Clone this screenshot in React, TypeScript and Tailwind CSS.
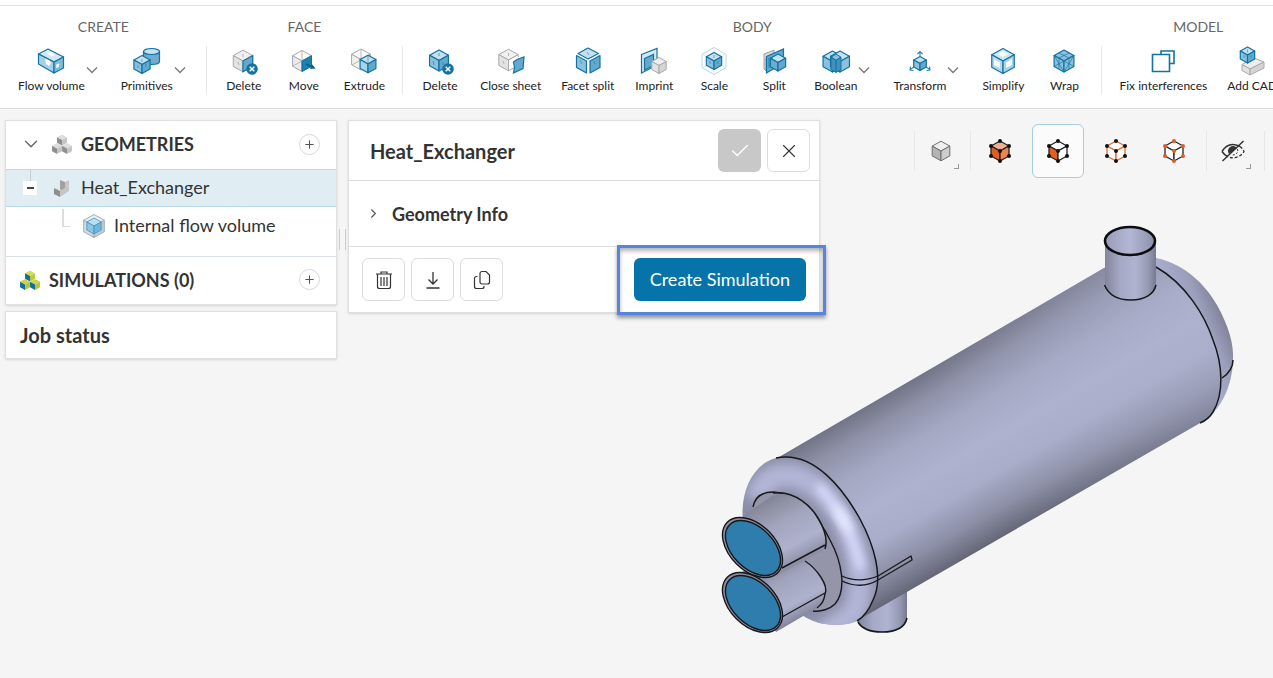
import React from "react";
import { Check, ChevronDown, ChevronRight, Plus, X } from "lucide-react";

const BLUE = "#1273a3";

type Pt = [number, number];
const pts = (list: Pt[]) => list.map((p) => p.join(",")).join(" ");

function cubePoints(cx: number, cy: number, r: number) {
  const w = r * 0.9;
  const h = r / 2;
  return {
    top: [cx, cy - r] as Pt,
    ur: [cx + w, cy - h] as Pt,
    lr: [cx + w, cy + h] as Pt,
    bottom: [cx, cy + r] as Pt,
    ll: [cx - w, cy + h] as Pt,
    ul: [cx - w, cy - h] as Pt,
    mid: [cx, cy] as Pt,
  };
}

type CubeProps = {
  cx: number;
  cy: number;
  r: number;
  top?: string;
  left?: string;
  right?: string;
  stroke?: string;
  sw?: number;
};

function Cube({ cx, cy, r, top = "#c5e0ee", left = "#8cc0dc", right = "#64a9cd", stroke = BLUE, sw = 1.2 }: CubeProps) {
  const c = cubePoints(cx, cy, r);
  return (
    <g stroke={stroke} strokeWidth={sw} strokeLinejoin="round">
      <polygon points={pts([c.top, c.ur, c.mid, c.ul])} fill={top} />
      <polygon points={pts([c.ul, c.mid, c.bottom, c.ll])} fill={left} />
      <polygon points={pts([c.mid, c.ur, c.lr, c.bottom])} fill={right} />
    </g>
  );
}

const grey = { top: "#f0f0f0", left: "#e2e2e2", right: "#d4d4d4", stroke: "#a9a9a9", sw: 1 };

function Badge() {
  return (
    <g>
      <circle cx="24" cy="23" r="5.8" fill={BLUE} />
      <path d="M21.7 20.7l4.6 4.6M26.3 20.7l-4.6 4.6" stroke="#fff" strokeWidth="1.5" />
    </g>
  );
}

function Icon({ children }: { children: React.ReactNode }) {
  return (
    <svg viewBox="0 0 32 32" className="size-8 shrink-0" fill="none" aria-hidden="true">
      {children}
    </svg>
  );
}

const icons: Record<string, React.ReactNode> = {
  flow: (
    <g stroke={BLUE} strokeWidth="1.2" strokeLinejoin="round">
      <path d="M3.500 8L13 3L28.500 11L19 16Z" fill="#d3e8f2" />
      <path d="M3.500 8L19 16V27L3.500 18Z" fill="#a5d0e5" />
      <path d="M19 16L28.500 11V22L19 27Z" fill="#7fbbd9" />
      <path d="M10 13l4 1 2 3-2 3-3-2zM21 19l2-1.500 1.500.5-1 3-2 1zM12 7l5-1 3 3-4 1.500z" fill="#fff" stroke="none" />
    </g>
  ),
  primitives: (
    <>
      <path d="M12.500 5.500v10c0 4 16 4 16 0v-10z" fill="#6cadd0" stroke={BLUE} strokeWidth="1.200" />
      <ellipse cx="20.500" cy="5.500" rx="8" ry="3" fill="#c5e0ee" stroke={BLUE} strokeWidth="1.200" />
      <Cube cx={11} cy={18.500} r={9} />
      <path d="M11 13v3M7 19v3M15 18v3" stroke={BLUE} strokeWidth=".5" />
    </>
  ),
  faceDelete: (
    <>
      <Cube cx={15} cy={15} r={10.800} {...grey} right="#64a9cd" />
      <path d="M15 8v3M10 16l1 3" stroke="#aaa" strokeWidth=".8" />
      <path d="M15 15l9.700-5.400v10.800L15 25.800z" stroke={BLUE} strokeWidth="1.200" />
      <Badge />
    </>
  ),
  move: (
    <>
      <Cube cx={14} cy={15} r={10.500} {...grey} top="#fbfbfb" left="#ececec" right="#1c82b2" />
      <path d="M4.500 20.200l9.500-5M14 4.500v10.500" stroke="#aaa" strokeWidth=".8" />
      <path d="M14 15l9.500-5.200v10.400L14 25.500z" fill="#1c82b2" stroke={BLUE} />
      <path d="M18 18l6 3" stroke="#0b5c87" strokeWidth="1.400" />
      <path d="M24 18.200l3.500 4.300-5.500.5z" fill="#0b5c87" />
    </>
  ),
  extrude: (
    <>
      <Cube cx={13} cy={13.500} r={10.500} {...grey} top="#fafafa" left="#f0f0f0" right="#e4e4e4" />
      <path d="M13 3v10M4 19l9-5" stroke="#aaa" strokeWidth=".8" />
      <Cube cx={20} cy={18} r={8.800} left="#a8d2e6" />
      <path d="M20 9.500V18" stroke={BLUE} strokeWidth=".5" />
    </>
  ),
  bodyDelete: (
    <>
      <Cube cx={15} cy={14.500} r={10.500} />
      <path d="M15 7v3M9 15l1 4M19 16v3" stroke={BLUE} strokeWidth=".6" />
      <Badge />
    </>
  ),
  closeSheet: (
    <>
      <Cube cx={13.500} cy={14} r={10.800} {...grey} right="#fff" />
      <path d="M13.500 7v3M8 15l1 3" stroke="#aaa" strokeWidth=".8" />
      <path d="M19.500 13V26h6V10z" fill="#fff" />
      <path d="M18.500 16L22 13.500l7-2.500-1 11.500L18.500 27l1-6z" fill="#64a9cd" stroke={BLUE} strokeWidth="1.200" />
    </>
  ),
  facetSplit: (
    <g stroke={BLUE} strokeWidth="1.200" strokeLinejoin="round">
      <path d="M16 2l10.500 5.500L16 13 6 7.500z" fill="#c5e0ee" />
      <path d="M4.500 9.500l10 5.500v12l-10-5.500z" fill="#8cc0dc" />
      <path d="M28 9.500L18 15v12l10-5.500z" fill="#64a9cd" />
      <path d="M15 6l2 3M8 14l2 4M22 15l1 3" strokeWidth=".5" />
    </g>
  ),
  imprint: (
    <>
      <path d="M3.500 8.500L19 2.500V19L3.500 27z" fill="#d3e8f2" stroke={BLUE} strokeWidth="1.200" />
      <path d="M6.500 12.500L15.500 8.500v11l-9 4.500z" fill="#64a9cd" stroke={BLUE} strokeWidth="1.200" />
      <Cube cx={21} cy={19.500} r={8} {...grey} />
    </>
  ),
  scale: (
    <>
      <path d="M16 1.500l12 6.800v13.400L16 28.500 4 21.700V8.300z" stroke="#b7d8e8" />
      <path d="M16 2v26M4 8l5 3M28 8l-5 3M4 22l5-3M28 22l-5-3" stroke="#dcebf2" />
      <Cube cx={16} cy={15} r={8.500} />
      <path d="M16 9v3M12 15v3M20 15v3" stroke={BLUE} strokeWidth=".5" />
    </>
  ),
  split: (
    <>
      <path d="M6 8l10-4v4L8 12v13l-2-2z" fill="#d8d8d8" stroke="#9a9a9a" strokeWidth=".9" />
      <path d="M8.500 10.500L25.500 3v14L8.500 27z" fill="#64a9cd" stroke={BLUE} strokeWidth="1.200" />
      <Cube cx={20} cy={16.500} r={8.500} left="#6cadd0" />
      <path d="M11 12v10M14 11v3" stroke={BLUE} strokeWidth=".8" />
    </>
  ),
  boolean: (
    <>
      <Cube cx={12.500} cy={15.500} r={10.500} />
      <Cube cx={20} cy={15.500} r={10.500} left="#64a9cd" right="#8cc0dc" />
      <path d="M16 8l5 3.200-5 3.200-5-3.200z" fill="#8cc0dc" stroke={BLUE} />
      <path d="M11 11.200v12.300l5 3 5-3V11.200l-5 3.200z" fill="#3e92bd" stroke={BLUE} />
      <path d="M16 14.500V26" stroke={BLUE} />
    </>
  ),
  transform: (
    <>
      <Cube cx={16} cy={17.500} r={7} />
      <g stroke="#2b82ad" strokeWidth="1.100">
        <path d="M16 10.500V6M13.500 8L16 5.500 18.500 8M10 21l-4 2.500M6.500 20.500L6 24l3.500.5M22 21l4 2.500M25.500 20.500L26 24l-3.500.5" />
      </g>
    </>
  ),
  simplify: (
    <>
      <Cube cx={16} cy={15} r={12.500} top="#cfe6f1" left="#b4d8e9" right="#a8d2e6" />
      <g fill="#fff" fillOpacity=".85">
        <path d="M16 5l5.500 3-5.500 3-5.500-3z" />
        <path d="M7 13l6 3.500v5.500L7 19zM19 16.500l6-3.500v6l-6 3z" />
      </g>
    </>
  ),
  wrap: (
    <>
      <Cube cx={16} cy={15} r={11} left="#8cc0dc" right="#8cc0dc" top="#8cc0dc" />
      <path d="M6 9.500l10 16.500L26 9.500M6 20.500l10-5.500 10 5.500M11 7l10 5M21 7l-10 5M11 12v11M21 12v11" stroke={BLUE} strokeWidth=".7" />
    </>
  ),
  fix: (
    <g stroke={BLUE} strokeWidth="1.600">
      <path d="M14 8V5h13v12.500h-4" />
      <path d="M5.500 8.500h17v17h-17z" />
    </g>
  ),
  addCad: (
    <>
      <g stroke="#aaa" strokeWidth="1" strokeLinejoin="round">
        <path d="M6 18.500L18 12l10 4-14 7z" fill="#ededed" />
        <path d="M6 18.500l8 4.500v6l-8-4.500z" fill="#e2e2e2" />
        <path d="M14 23l14-7v6l-14 7z" fill="#d4d4d4" />
      </g>
      <Cube cx={11.500} cy={9} r={8} />
      <path d="M11.500 3.500v3M8 9v3M15 9v3" stroke={BLUE} strokeWidth=".5" />
    </>
  ),
};

type Tool = { label: string; icon: string; menu?: boolean };
const groups: { title: string; tools: Tool[] }[] = [
  {
    title: "CREATE",
    tools: [
      { label: "Flow volume", icon: "flow", menu: true },
      { label: "Primitives", icon: "primitives", menu: true },
    ],
  },
  {
    title: "FACE",
    tools: [
      { label: "Delete", icon: "faceDelete" },
      { label: "Move", icon: "move" },
      { label: "Extrude", icon: "extrude" },
    ],
  },
  {
    title: "BODY",
    tools: [
      { label: "Delete", icon: "bodyDelete" },
      { label: "Close sheet", icon: "closeSheet" },
      { label: "Facet split", icon: "facetSplit" },
      { label: "Imprint", icon: "imprint" },
      { label: "Scale", icon: "scale" },
      { label: "Split", icon: "split" },
      { label: "Boolean", icon: "boolean", menu: true },
      { label: "Transform", icon: "transform", menu: true },
      { label: "Simplify", icon: "simplify" },
      { label: "Wrap", icon: "wrap" },
    ],
  },
  {
    title: "MODEL",
    tools: [
      { label: "Fix interferences", icon: "fix" },
      { label: "Add CAD", icon: "addCad" },
    ],
  },
];

function Ribbon() {
  return (
    <header className="overflow-hidden border-b border-[#dcdcdc] bg-white pt-[5px]">
      <div className="flex w-max min-w-full border-t border-[#dedede] px-2 pb-[14px] pt-3">
        {groups.map((group, i) => (
          <React.Fragment key={group.title}>
            {i > 0 && <div className="mx-[7px] mt-7 w-px bg-[#e8e8e8]" />}
            <section className="flex flex-col" aria-label={group.title}>
              <h2 className="text-center text-sm leading-[18px] text-[#666]">{group.title}</h2>
              <div className="mt-[10px] flex">
                {group.tools.map((tool) => (
                  <div key={tool.label} className="flex">
                    <button className="flex min-w-[60px] flex-col items-center px-[10px] text-xs leading-4 text-[#222]">
                      <Icon>{icons[tool.icon]}</Icon>
                      <span className="whitespace-nowrap">{tool.label}</span>
                    </button>
                    {tool.menu && (
                      <button className="-ml-[9px] mr-[13px] mt-[18px] h-3 w-3" aria-label={`${tool.label} options`}>
                        <svg viewBox="0 0 12 12" className="size-3" fill="none" stroke="#777" strokeWidth="1.300">
                          <path d="M1 3.500L6 8.500l5-5" />
                        </svg>
                      </button>
                    )}
                  </div>
                ))}
              </div>
            </section>
          </React.Fragment>
        ))}
      </div>
    </header>
  );
}

type Shade = { top: string; left: string; right: string };

function CubeStack({ a, b }: { a: Shade; b: Shade }) {
  return (
    <svg viewBox="0 0 22 22" className="size-[22px] shrink-0" aria-hidden="true">
      <Cube cx={11} cy={7} r={5.500} {...a} stroke="none" />
      <Cube cx={6} cy={15.500} r={5.500} {...b} stroke="none" />
      <Cube cx={16} cy={15.500} r={5.500} {...b} stroke="none" />
    </svg>
  );
}

function AddButton({ label }: { label: string }) {
  return (
    <button aria-label={label} className="flex size-[21px] items-center justify-center rounded-full border border-[#d2d9dc] bg-white">
      <Plus className="size-[13px] text-[#555]" strokeWidth={2} />
    </button>
  );
}

function Sidebar() {
  const greyShade = { top: "#dedede", left: "#8f8f8f", right: "#c4c4c4" };
  return (
    <nav className="flex w-[332px] shrink-0 flex-col gap-[6px] text-[#333]" aria-label="Project">
      <div className="border border-[#e0e0e0] bg-white shadow">
        <div className="flex h-12 items-center pb-[2px] pl-[14px] pr-4">
          <button aria-label="Collapse geometries" className="mr-[9px]">
            <ChevronDown className="size-[22px] text-[#666]" strokeWidth={1.5} />
          </button>
          <CubeStack a={greyShade} b={greyShade} />
          <h2 className="ml-2 flex-1 text-lg font-bold leading-6">GEOMETRIES</h2>
          <AddButton label="Add geometry" />
        </div>
        <div className="flex h-[38px] items-stretch border-y border-[#bcd9e6] bg-[#e0eef4] pl-4">
          <div className="flex w-4 flex-col items-center">
            <div className="h-[11px] w-px bg-[#c5d0d5]" />
            <button aria-label="Collapse Heat_Exchanger" className="flex size-[14px] items-center justify-center bg-white">
              <span className="h-[2px] w-[7px] bg-[#444]" />
            </button>
          </div>
          <svg viewBox="0 0 22 22" className="ml-3 size-[22px] self-center" aria-hidden="true">
            <path d="M10 3l4-2 5 2-4 2z" fill="#ededed" />
            <path d="M15 5l4-2v11l-9 6v-6l5-3z" fill="#c6c6c6" />
            <path d="M10 3l5 2v6l-5 3z" fill="#a1a1a1" />
            <path d="M4 11l3-1 4 3-1 1z" fill="#e5e5e5" />
            <path d="M4 11l6 3v6l-6-3z" fill="#8e8e8e" />
          </svg>
          <span className="ml-[9px] mt-[5px] text-lg leading-6">Heat_Exchanger</span>
        </div>
        <div className="flex h-[49px] items-start pl-14 pt-[2px]">
          <div className="h-[18px] w-2 border-b border-l-2 border-[#dcdcdc]" />
          <svg viewBox="0 0 24 24" className="ml-3 mt-[5px] size-6" aria-hidden="true">
            <Cube cx={12} cy={12} r={11.500} top="#e8eef1" left="#d0dbe0" right="#c0ccd2" stroke="#a3b1b8" sw={1} />
            <Cube cx={12} cy={12} r={8} top="#b9e0f2" left="#8cc6e4" right="#6fb5dc" stroke="#4a93bd" sw={0.8} />
          </svg>
          <span className="ml-2 mt-1 text-lg leading-6">Internal flow volume</span>
        </div>
        <div className="flex h-12 items-center border-t border-[#d8dfe2] pb-[2px] pl-[13px] pr-4">
          <CubeStack
            a={{ top: "#d5dd52", left: "#0f6ea3", right: "#b9c93a" }}
            b={{ top: "#cdd640", left: "#0f6ea3", right: "#b5c631" }}
          />
          <h2 className="ml-2 flex-1 text-lg font-bold leading-6">SIMULATIONS (0)</h2>
          <AddButton label="Add simulation" />
        </div>
      </div>
      <div className="flex h-12 items-center border border-[#e0e0e0] bg-white pl-[14px] shadow">
        <h2 className="text-xl font-bold leading-6">Job status</h2>
      </div>
    </nav>
  );
}

const squareButton = "flex size-[43px] items-center justify-center rounded-md border border-[#dcdcdc] bg-white text-[#333]";

function DetailsPanel() {
  return (
    <section className="w-[472px] shrink-0 border border-[#e0e0e0] bg-white text-[#333] shadow" aria-label="Geometry details">
      <div className="flex h-[60px] items-center gap-[6px] border-b border-[#dedede] pl-[21px] pr-[9px]">
        <h1 className="flex-1 text-xl font-bold leading-6">Heat_Exchanger</h1>
        <button aria-label="Apply" className="flex size-[43px] items-center justify-center rounded-md bg-[#c8c8c8] text-white">
          <Check className="size-[22px]" strokeWidth={1.5} />
        </button>
        <button aria-label="Close" className={squareButton}>
          <X className="size-[22px]" strokeWidth={1.2} />
        </button>
      </div>
      <button className="flex h-[65px] w-full items-center pl-[17px]">
        <ChevronRight className="size-[15px] text-[#555]" strokeWidth={1.8} />
        <span className="ml-[11px] text-lg font-bold leading-6">Geometry Info</span>
      </button>
      <div className="relative flex h-[66px] items-center gap-[6px] border-t border-[#dedede] px-[13px]">
        <button aria-label="Delete" className={squareButton}>
          <svg viewBox="0 0 20 20" className="size-5" fill="none" stroke="currentColor" strokeWidth="1.200">
            <path d="M2 4h16M7 4V2h6v2M3.500 4v12.500a2 2 0 0 0 2 2h9a2 2 0 0 0 2-2V4M7 7v9M10 7v9M13 7v9" />
          </svg>
        </button>
        <button aria-label="Download" className={squareButton}>
          <svg viewBox="0 0 20 20" className="size-5" fill="none" stroke="currentColor" strokeWidth="1.300">
            <path d="M10 2v12M5.500 9.500L10 14l4.500-4.500M3.500 18h13" />
          </svg>
        </button>
        <button aria-label="Copy" className={squareButton}>
          <svg viewBox="0 0 20 20" className="size-5" fill="none" stroke="currentColor" strokeWidth="1.200">
            <path d="M10 1.500h4l3.500 3.500v7a2 2 0 0 1-2 2H10a2 2 0 0 1-2-2V3.500a2 2 0 0 1 2-2zM5.500 6.500H4.500a2 2 0 0 0-2 2v8a2 2 0 0 0 2 2H10a2 2 0 0 0 2-2v-.5" />
          </svg>
        </button>
        <button className="ml-auto h-[43px] rounded-md bg-[#0674a8] px-4 pb-[2px] text-lg leading-6 text-white">Create Simulation</button>
        <div className="pointer-events-none absolute -right-[7px] -top-[2px] h-[70px] w-[209px] border-[3px] border-[#5585dc] shadow-[0_3px_4px_rgba(0,0,0,0.4),inset_0_3px_4px_rgba(0,0,0,0.3)]" />
      </div>
    </section>
  );
}

function SelectCube({ fill, line, dot }: { fill: [string, string, string]; line: string; dot: string }) {
  const c = cubePoints(12, 12, 10);
  return (
    <svg viewBox="0 0 24 24" className="size-6" aria-hidden="true">
      <Cube cx={12} cy={12} r={10} top={fill[0]} left={fill[1]} right={fill[2]} stroke={line} sw={1.300} />
      {Object.values(c).map(([x, y]) => (
        <circle key={`${x}-${y}`} cx={x} cy={y} r="2" fill={dot} />
      ))}
    </svg>
  );
}

function Corner() {
  return <span className="absolute bottom-[9px] right-2 size-[5px] border-b border-r border-[#999]" />;
}

function ViewTools() {
  const btn = "relative flex h-[54px] w-[52px] items-center justify-center rounded-md";
  const sep = "h-10 w-px bg-[#e6e6e6]";
  return (
    <div className="z-10 ml-auto mr-2 mt-1 flex shrink-0 items-center" role="toolbar" aria-label="View">
      <div className={sep} />
      <button aria-label="Render mode" className={btn}>
        <svg viewBox="0 0 24 24" className="size-6" aria-hidden="true">
          <Cube cx={12} cy={12} r={9.800} top="#eeeeee" left="#b4b4b4" right="#cccccc" stroke="#6e6e6e" sw={1} />
        </svg>
        <Corner />
      </button>
      <div className={`${sep} mx-[3px]`} />
      <div className="flex gap-[6px]">
        <button aria-label="Select volumes" className={btn}>
          <SelectCube fill={["#f3b08f", "#df5f20", "#ee8450"]} line="#222" dot="#111" />
        </button>
        <button aria-label="Select faces" aria-pressed="true" className={`${btn} border border-[#a5cde2] bg-[#fbfbfb]`}>
          <SelectCube fill={["#fff", "#df5f20", "#fff"]} line="#222" dot="#111" />
        </button>
        <button aria-label="Select edges" className={btn}>
          <SelectCube fill={["#fff", "#fff", "#fff"]} line="#df6a30" dot="#111" />
        </button>
        <button aria-label="Select vertices" className={btn}>
          <SelectCube fill={["#fff", "#fff", "#fff"]} line="#222" dot="#df5f20" />
        </button>
      </div>
      <div className={`${sep} ml-[6px]`} />
      <button aria-label="Toggle visibility" className={btn}>
        <svg viewBox="0 0 26 26" className="size-[26px]" fill="none" stroke="#333" aria-hidden="true">
          <path d="M2 13.500C6 7 12 4.500 20 8.500M2 13.500c2 3 4 4.500 6 5.300" strokeWidth="1.500" />
          <path d="M20 8.500c2 1.500 3 3 4 5-3 5-8 7-14 6" strokeWidth="1.400" strokeDasharray="3 2" />
          <path d="M9 16a5 5 0 1 1 8-6z" fill="#333" stroke="none" />
          <path d="M17.500 11c1 3-1 6-5 6" strokeDasharray="2 1.500" />
          <path d="M2.500 23L23.500 3" strokeWidth="1.500" />
        </svg>
        <Corner />
      </button>
      <div className={`${sep} ml-[5px]`} />
    </div>
  );
}

function PipeEnd({ dy }: { dy: number }) {
  return (
    <g transform={`translate(0 ${dy})`} stroke="#17181c" strokeWidth="1.400">
      <ellipse cx="752.500" cy="547.500" rx="35.700" ry="22.900" transform="rotate(45 752.500 547.500)" fill="#8f90a6" />
      <ellipse cx="753" cy="548" rx="33" ry="20.600" transform="rotate(45 753 548)" fill="#2f7dad" />
    </g>
  );
}

const SHELL = "M779 457L1104 268C1120 260 1140 259 1156 267C1186 284 1205 316 1213 340C1223 365 1224 394 1213 412C1210 417 1205 421 1200 423L860 619C840 610 790 560 779 457Z";
const NEAR_CAP = "M742.500 515C742 488 754 464 776 458C815 450 845 492 860 519C874 545 884 578 873 600C869 610 864 617 857 621C846 626 820 628 802 615L770 570Z";
const NEAR_SEAM = "M776 458C815 450 845 492 860 519C874 545 884 578 873 600C869 610 864 617 857 621";
const FAR_SEAM = "M1156 267C1186 284 1205 316 1213 340C1223 365 1224 394 1213 412C1210 417 1205 421 1200 423";

function Model() {
  return (
    <svg viewBox="715 220 525 420" className="absolute right-[33px] top-[111px] w-[525px]" role="img" aria-label="Heat exchanger model" fill="none">
      <defs>
        <linearGradient id="shell" gradientUnits="userSpaceOnUse" x1="942" y1="363" x2="1032" y2="519">
          <stop offset="0" stopColor="#727587" />
          <stop offset=".12" stopColor="#8d90a6" />
          <stop offset=".3" stopColor="#a4a8c3" />
          <stop offset=".5" stopColor="#aeb2cf" />
          <stop offset=".68" stopColor="#a9adca" />
          <stop offset=".86" stopColor="#8b8ea4" />
          <stop offset="1" stopColor="#666879" />
        </linearGradient>
        <linearGradient id="shellEnd" gradientUnits="userSpaceOnUse" x1="960" y1="440" x2="1180" y2="313">
          <stop offset="0" stopColor="#adb1ce" stopOpacity="0" />
          <stop offset="1" stopColor="#adb1ce" stopOpacity=".45" />
        </linearGradient>
        <linearGradient id="farCap" gradientUnits="userSpaceOnUse" x1="1190" y1="340" x2="1232" y2="322">
          <stop offset="0" stopColor="#a9accb" />
          <stop offset=".5" stopColor="#9c9fbb" />
          <stop offset=".8" stopColor="#85889f" />
          <stop offset="1" stopColor="#707387" />
        </linearGradient>
        <filter id="soft" x="-30%" y="-30%" width="160%" height="160%">
          <feGaussianBlur stdDeviation="6" />
        </filter>
        <filter id="softer" x="-50%" y="-50%" width="200%" height="200%">
          <feGaussianBlur stdDeviation="4" />
        </filter>
        <clipPath id="capClip">
          <path d={NEAR_CAP} />
        </clipPath>
        <linearGradient id="nozzle" x1="0" x2="1" y1="0" y2="0">
          <stop offset="0" stopColor="#82859b" />
          <stop offset=".3" stopColor="#a5a9c5" />
          <stop offset=".6" stopColor="#afb3d1" />
          <stop offset=".85" stopColor="#9699b2" />
          <stop offset="1" stopColor="#77798f" />
        </linearGradient>
        <linearGradient id="bore" x1="0" x2="1" y1="0" y2="0">
          <stop offset="0" stopColor="#9a9db8" />
          <stop offset=".5" stopColor="#b3b7d5" />
          <stop offset="1" stopColor="#8d90aa" />
        </linearGradient>
        <linearGradient id="pipe" gradientUnits="userSpaceOnUse" x1="762" y1="504" x2="796" y2="568">
          <stop offset="0" stopColor="#858799" />
          <stop offset=".35" stopColor="#a2a5bc" />
          <stop offset=".7" stopColor="#afb2cd" />
          <stop offset="1" stopColor="#85879c" />
        </linearGradient>
        <linearGradient id="pipeLow" gradientUnits="userSpaceOnUse" x1="762" y1="559" x2="796" y2="623">
          <stop offset="0" stopColor="#747688" />
          <stop offset=".4" stopColor="#a1a4bc" />
          <stop offset=".75" stopColor="#afb2cd" />
          <stop offset="1" stopColor="#7e8095" />
        </linearGradient>
      </defs>

      <path d="M858 600V622C862 629 871 632 882 632C896 632 905 627 907 618V585Z" fill="url(#nozzle)" />
      <path d="M858 622C862 629 871 632 882 632C896 632 905 627 907 618" stroke="#17181c" strokeWidth="1.600" />

      <path d="M1140 256L1156 258C1186 264 1206 286 1217 305C1229 327 1234 344 1233 361C1232 385 1222 411 1200 423L1150 400Z" fill="url(#farCap)" />
      <path d={SHELL} fill="url(#shell)" />
      <path d={SHELL} fill="url(#shellEnd)" />
      <path d={FAR_SEAM} stroke="#17181c" strokeWidth="1.500" />
      <path d="M1222 378C1228 374 1233 368 1233 360" stroke="#17181c" strokeWidth="1.500" />

      <path d={NEAR_CAP} fill="#8a8da5" />
      <g clipPath="url(#capClip)">
        <path d="M757 500C762 472 792 466 820 490C852 520 868 570 855 612L815 640" stroke="#b2b5d6" strokeWidth="24" filter="url(#soft)" />
        <path d="M820 488C838 508 853 535 860 566" stroke="#d8dcfd" strokeWidth="9" strokeLinecap="round" filter="url(#softer)" />
        <ellipse cx="843" cy="519" rx="16" ry="5" transform="rotate(60 843 519)" fill="#e6e9ff" filter="url(#softer)" />
      </g>
      <path d={NEAR_SEAM} stroke="#17181c" strokeWidth="1.500" />
      <path d="M753 507C755 497 762 492 773 492C797 492 819 517 830 540C842 562 847 590 835 604C830 609 821 612 813 611L780 580Z" fill="#9495a8" />
      <path d="M753 507C755 497 762 492 773 492C797 492 819 517 830 540C842 562 847 590 835 604C830 609 821 612 813 611" stroke="#17181c" strokeWidth="1.400" />
      <path d="M842 576C855 582 868 580 878 576L911 556L912 560L878 580C868 586 855 587 842 581" stroke="#17181c" strokeWidth="1.300" strokeLinejoin="round" />

      <path d="M738 573L796 553C812 560 829 583 825 594C824 601 822 604 817 608L776 632Z" fill="url(#pipeLow)" />
      <path d="M805 561C816 568 829 585 825 594C824 601 822 604 817 608M782 617L825 593" stroke="#17181c" strokeWidth="1.400" />
      <PipeEnd dy={55} />
      <path d="M740 518L772 496C790 488 807 502 817 518C824 528 828 540 825 549L817 554L773 577.500Z" fill="url(#pipe)" />
      <path d="M773 493C796 490 812 508 818 518C824 528 828 540 825 549M782 568L825 545" stroke="#17181c" strokeWidth="1.500" />
      <PipeEnd dy={0} />

      <path d="M1105 241V285C1109 296 1119 300 1131 300C1145 300 1154 294 1156 285V241Z" fill="url(#nozzle)" />
      <path d="M1104.500 285C1109 296 1119 300 1131 300C1145 300 1154 294 1156 285" stroke="#17181c" strokeWidth="1.500" />
      <ellipse cx="1130" cy="241" rx="25" ry="14" fill="url(#bore)" stroke="#0d0e10" strokeWidth="2.600" />
    </svg>
  );
}

export default function App() {
  return (
    <div className="flex min-h-screen flex-col overflow-hidden bg-[#f5f5f5] font-['Lato','Noto_Sans',sans-serif]">
      <Ribbon />
      <main className="relative flex min-h-[569px] flex-1 items-start pl-[5px] pt-[11px]">
        <Model />
        <Sidebar />
        <div className="flex w-[11px] shrink-0 justify-center gap-[5px] pt-[109px]" aria-hidden="true">
          <div className="h-[21px] w-px bg-[#ccc]" />
          <div className="h-[21px] w-px bg-[#ccc]" />
        </div>
        <div className="relative">
          <DetailsPanel />
        </div>
        <ViewTools />
      </main>
    </div>
  );
}
